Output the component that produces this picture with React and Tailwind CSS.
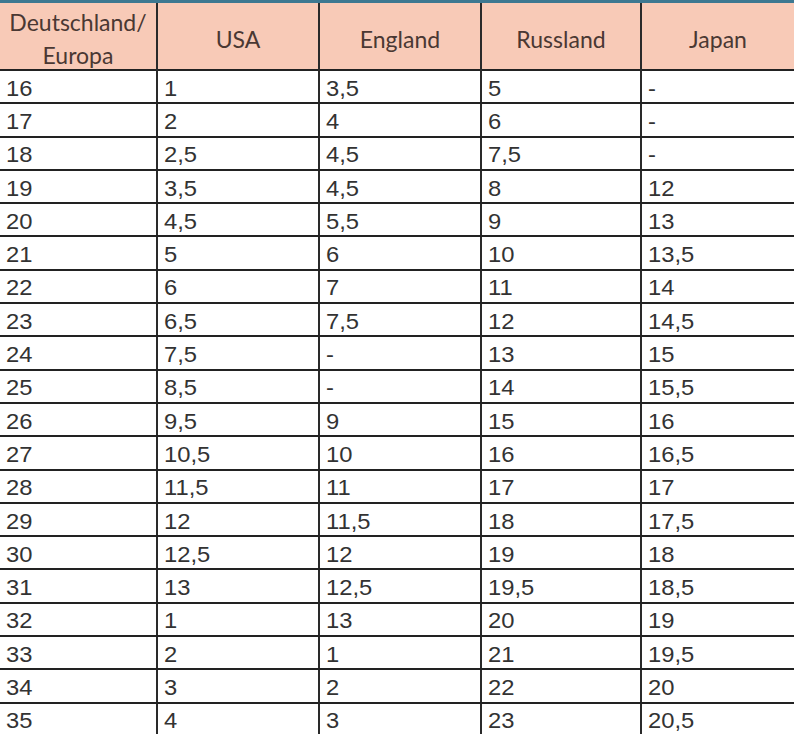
import React from "react";

const rows = [
  ["16", "1", "3,5", "5", "-"],
  ["17", "2", "4", "6", "-"],
  ["18", "2,5", "4,5", "7,5", "-"],
  ["19", "3,5", "4,5", "8", "12"],
  ["20", "4,5", "5,5", "9", "13"],
  ["21", "5", "6", "10", "13,5"],
  ["22", "6", "7", "11", "14"],
  ["23", "6,5", "7,5", "12", "14,5"],
  ["24", "7,5", "-", "13", "15"],
  ["25", "8,5", "-", "14", "15,5"],
  ["26", "9,5", "9", "15", "16"],
  ["27", "10,5", "10", "16", "16,5"],
  ["28", "11,5", "11", "17", "17"],
  ["29", "12", "11,5", "18", "17,5"],
  ["30", "12,5", "12", "19", "18"],
  ["31", "13", "12,5", "19,5", "18,5"],
  ["32", "1", "13", "20", "19"],
  ["33", "2", "1", "21", "19,5"],
  ["34", "3", "2", "22", "20"],
  ["35", "4", "3", "23", "20,5"],
];

const headers = [
  <>Deutschland/<br />Europa</>,
  "USA",
  "England",
  "Russland",
  "Japan",
];

const grid = "grid grid-cols-[158px_162px_162px_160px_1fr]";

export default function App() {
  return (
    <div className="w-[794px] h-[734px] overflow-hidden bg-white">
      <div className="h-[3px] bg-[#3d7891]" />
      <div className={`${grid} h-[68px] bg-[#f8cab7] border-b-2 border-[#222]`}>
        {headers.map((h, i) => (
          <div
            key={i}
            className={`flex items-center justify-center text-center font-[family-name:Lato,sans-serif] text-[23px] leading-[33px] text-[#4a3833] ${i < 4 ? "border-r-2 border-[#2a2a2a]" : ""}`}
          >
            <span className="mt-[3px]">{h}</span>
          </div>
        ))}
      </div>
      {rows.map((r, ri) => (
        <div key={ri} className={`${grid} h-[33.3px] shrink-0 border-b-2 border-[#222]`}>
          {r.map((c, ci) => (
            <div
              key={ci}
              className={`flex items-center pl-[6px] pt-[4px] font-[family-name:Liberation_Sans,Arial,sans-serif] text-[22px] leading-[26px] text-[#333] ${ci < 4 ? "border-r-2 border-[#2a2a2a]" : ""}`}
            >
              <span className="inline-block origin-left scale-x-[1.08]">{c}</span>
            </div>
          ))}
        </div>
      ))}
    </div>
  );
}
